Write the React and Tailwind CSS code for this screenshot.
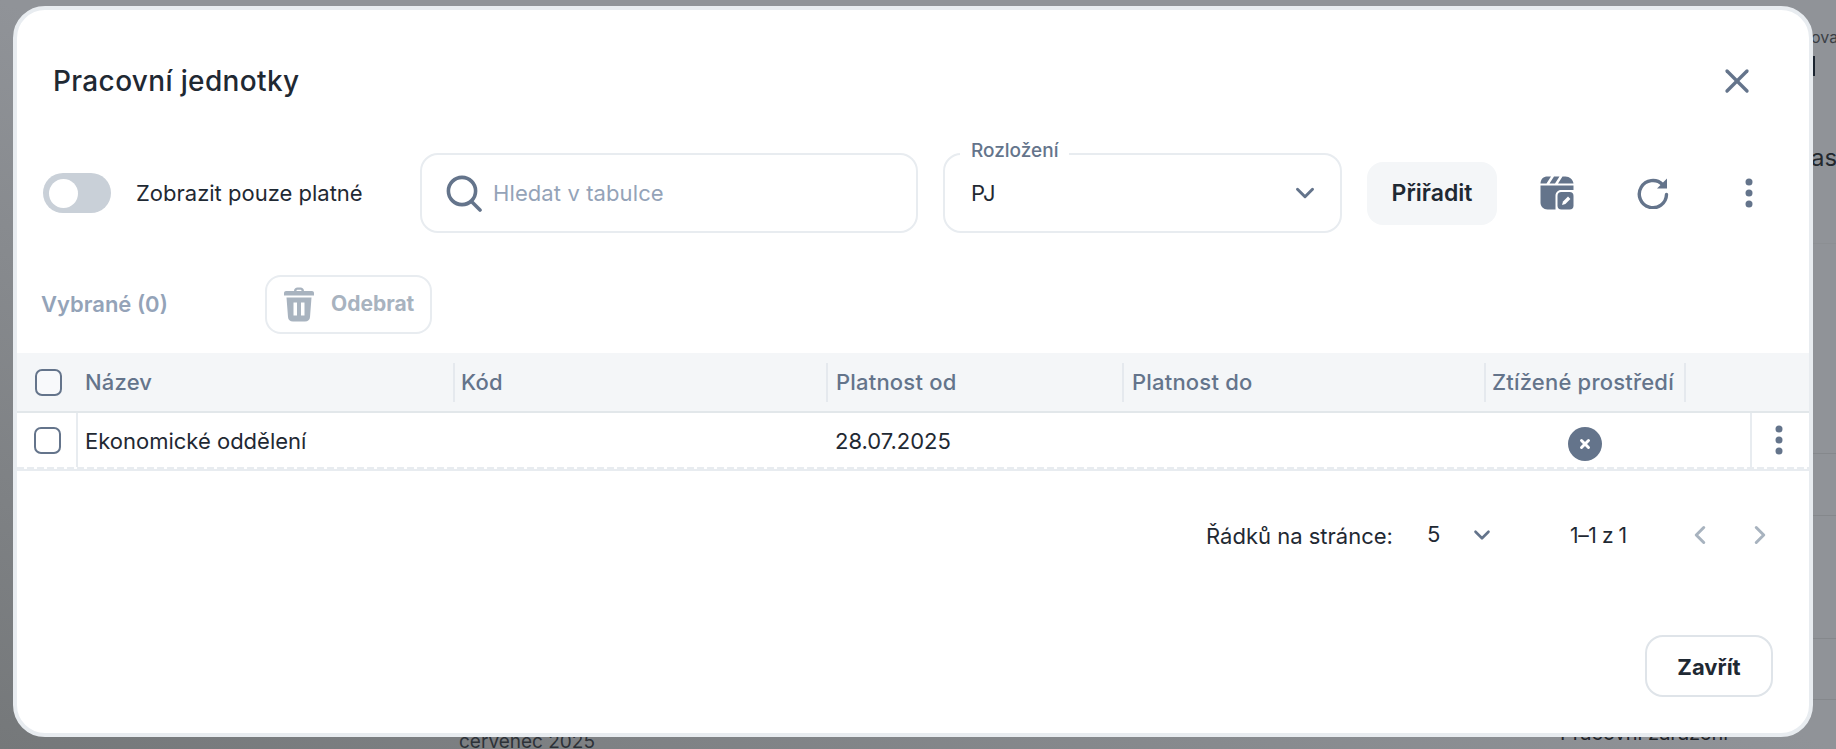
import React, { useState } from 'react';
import { ChevronDown, ChevronLeft, ChevronRight, X } from 'lucide-react';

const Dots = ({ className = '' }) => (
  <svg width="8" height="30" viewBox="0 0 8 30" className={className}>
    <circle cx="4" cy="4" r="3.5" fill="#64748b" />
    <circle cx="4" cy="15" r="3.5" fill="#64748b" />
    <circle cx="4" cy="26" r="3.5" fill="#64748b" />
  </svg>
);

const SearchIcon = () => (
  <svg width="36" height="37" viewBox="0 0 36 37" fill="none" stroke="#64748b" strokeWidth="3.6" strokeLinecap="round">
    <circle cx="16" cy="16" r="13.6" />
    <path d="M26 27l8 8" />
  </svg>
);

const ClapperIcon = () => (
  <svg width="34" height="34" viewBox="0 0 34 34">
    <path fill="#64748b" d="M6.5 0.5H11L6.5 7.5H0.5C0.8 3.5 3 0.8 6.5 0.5ZM14 0.5H19.5L15 7.5H9.5ZM22.5 0.5H25.5C29.5 0.5 33 3.5 33.5 7.5H18Z" />
    <path fill="#64748b" d="M0.5 9.5H33.5V14H21C18 14 15.5 16.5 15.5 19.5V33.5H7.5C3.5 33.5 0.5 30.5 0.5 26.5Z" />
    <rect x="17.5" y="16" width="16" height="17.5" rx="4" fill="#64748b" />
    <path d="M22 29l1-3.4 5-5 2.4 2.4-5 5z" fill="#fff" />
  </svg>
);

const RefreshIcon = () => (
  <svg width="32" height="32" viewBox="0 0 32 32" fill="none">
    <path d="M25.5 7.5A13.6 13.6 0 1 0 29.5 17.5" stroke="#64748b" strokeWidth="3.4" strokeLinecap="round" />
    <path d="M30 1.5V11.5H20Z" fill="#64748b" />
  </svg>
);

const TrashIcon = () => (
  <svg width="30" height="35" viewBox="0 0 30 35">
    <path fill="#a8b3bf" d="M10 4C10 1.8 11.6 0.5 13.5 0.5H16.5C18.4 0.5 20 1.8 20 4H28C29 4 30 4.8 30 6V8.5H0V6C0 4.8 1 4 2 4ZM12.5 4H17.5C17.5 3 17 2.8 16.2 2.8H13.8C13 2.8 12.5 3 12.5 4Z" />
    <path fill="#a8b3bf" fillRule="evenodd" d="M2.5 10.5H27.5L26 30C25.8 32.8 24 34.5 21 34.5H9C6 34.5 4.2 32.8 4 30ZM9.5 15.5V28.5H13V15.5ZM17 15.5V28.5H20.5V15.5Z" />
  </svg>
);

const Checkbox = () => (
  <span className="block w-[27px] h-[27px] rounded-[7px] border-2 border-[#64748b] bg-white/40" />
);

// hlavicka sloupce, sirka vcetne oddelovace vpravo
const HeaderCell = ({ children, width, pl = 'pl-2' }) => (
  <div className={`${width} ${pl} h-[39px] shrink-0 flex items-center border-r-2 border-[#e5e9ee] text-[#64748b] font-medium text-[22px] tracking-[0.2px] whitespace-nowrap`}>
    {children}
  </div>
);

export default function App() {
  const [onlyValid, setOnlyValid] = useState(false);

  return (
    <div className="relative w-[1836px] h-[749px] overflow-hidden bg-[linear-gradient(to_top_right,#75787a_0%,#909398_50%)] pl-[13px] pt-[6px] font-['Inter','Liberation_Sans',sans-serif]">
      {/* stranka pod dialogem */}
      <span className="absolute left-[1811px] top-[25px] text-[16px] text-[#3b4046] whitespace-nowrap">ova</span>
      <span className="absolute left-[1813px] top-[56px] w-[2px] h-[20px] bg-[#1b2430]" />
      <span className="absolute left-[1811px] top-[140px] text-[24px] text-[#23282e] whitespace-nowrap">ast</span>
      <span className="absolute left-[1813px] right-0 top-[243px] h-px bg-[#8c8f93]" />
      <span className="absolute left-[1813px] right-0 top-[453px] h-px bg-[#85888c]" />
      <span className="absolute left-[1813px] right-0 top-[515px] h-px bg-[#85888c]" />
      <span className="absolute left-[1813px] right-0 top-[638px] h-px bg-[#85888c]" />
      <span className="absolute left-[1813px] right-0 top-[699px] h-px bg-[#85888c]" />
      <span className="absolute left-[459px] top-[728px] text-[19px] text-[#2d3238] whitespace-nowrap">červenec 2025</span>
      <span className="absolute left-[1560px] top-[718px] text-[20px] text-[#1f2429] whitespace-nowrap">Pracovní zařazení</span>

      <div className="relative w-[1800px] h-[731px] bg-white border-4 border-[#e8ecf0] rounded-[32px] flex flex-col text-[#1f2933] overflow-hidden">
        {/* titulek */}
        <div className="flex items-center justify-between h-[110px] shrink-0 pl-[36px] pr-[52px] pt-[32px]">
          <h2 className="text-[28px] font-medium leading-none tracking-[0.35px] text-[#1f2933]">Pracovní jednotky</h2>
          <button className="text-[#64748b]">
            <X size={40} strokeWidth={2} />
          </button>
        </div>

        {/* filtry */}
        <div className="flex items-center h-[80px] shrink-0 mt-[33px]">
          <button
            onClick={() => setOnlyValid(!onlyValid)}
            className="ml-[26px] w-[68px] h-[40px] rounded-full bg-[#c9d0d8] flex items-center pl-[6px] shrink-0"
          >
            <span className="block w-[29px] h-[29px] rounded-full bg-white" />
          </button>
          <span className="ml-[25px] w-[284px] shrink-0 text-[22px] text-[#1f2933]">Zobrazit pouze platné</span>

          <div className="w-[498px] h-[80px] shrink-0 rounded-[18px] border-2 border-[#e8ecf0] flex items-center pl-[24px]">
            <SearchIcon />
            <input
              placeholder="Hledat v tabulce"
              className="ml-[11px] flex-1 min-w-0 outline-none text-[22px] tracking-[0.1px] placeholder:text-[#94a3b8]"
            />
          </div>

          <div className="relative ml-[25px] w-[399px] h-[80px] shrink-0 rounded-[18px] border-2 border-[#e8ecf0] flex items-center justify-between pl-[26px] pr-[20px]">
            <span className="absolute left-[15px] -top-[15px] px-[11px] bg-white text-[19px] leading-[22px] font-medium text-[#64748b]">Rozložení</span>
            <span className="text-[22px] text-[#1f2933]">PJ</span>
            <ChevronDown size={30} strokeWidth={2.4} className="text-[#64748b]" />
          </div>

          <button className="ml-[25px] w-[130px] h-[63px] shrink-0 rounded-[16px] bg-[#f4f6f8] text-[23px] font-semibold text-[#1f2933]">
            Přiřadit
          </button>

          <div className="ml-[43px] shrink-0 flex"><ClapperIcon /></div>
          <div className="ml-[63px] shrink-0 flex"><RefreshIcon /></div>
          <div className="ml-[76px] shrink-0 flex"><Dots /></div>
        </div>

        {/* vybrane */}
        <div className="flex items-center h-[59px] shrink-0 mt-[42px]">
          <span className="ml-[24px] w-[224px] shrink-0 text-[22px] font-semibold text-[#94a3b8]">Vybrané (0)</span>
          <button className="w-[167px] h-[59px] shrink-0 rounded-[16px] border-2 border-[#e8ecf0] flex items-center pl-[17px] gap-[17px] text-[21px] font-bold text-[#a8b3bf]">
            <TrashIcon />
            <span className="-mt-[2px]">Odebrat</span>
          </button>
        </div>

        {/* tabulka */}
        <div className="mt-[19px] shrink-0">
          <div className="h-[60px] bg-[#f4f6f8] border-b-2 border-[#e2e7ea] flex items-center">
            <div className="w-[61px] pl-[18px] shrink-0"><Checkbox /></div>
            <HeaderCell width="w-[377px]" pl="pl-[7px]">Název</HeaderCell>
            <HeaderCell width="w-[373px]" pl="pl-[6px]">Kód</HeaderCell>
            <HeaderCell width="w-[296px]">Platnost od</HeaderCell>
            <HeaderCell width="w-[362px]">Platnost do</HeaderCell>
            <HeaderCell width="w-[200px]" pl="pl-[6px]">Ztížené prostředí</HeaderCell>
          </div>
          <div className="h-[54px] flex text-[22px] text-[#1f2933]">
            <div className="w-[61px] shrink-0 border-r-2 border-[#e8ecf0] pl-[17px] flex items-center"><Checkbox /></div>
            <div className="w-[749px] shrink-0 pl-[7px] flex items-center"><span className="mt-[2px]">Ekonomické oddělení</span></div>
            <div className="w-[658px] shrink-0 pl-[8px] flex items-center"><span className="mt-[2px]">28.07.2025</span></div>
            <div className="w-[265px] shrink-0 flex items-center justify-end">
              <span className="mr-[148px] w-[34px] h-[34px] rounded-full bg-[#64748b] flex items-center justify-center mt-[7px]">
                <X size={14} strokeWidth={5} className="text-white" />
              </span>
            </div>
            <div className="flex-1 border-l-2 border-[#e8ecf0] flex items-center justify-center pr-[4px]">
              <Dots />
            </div>
          </div>
          {/* prerusovana linka nad plnou */}
          <div className="h-[2px] bg-[repeating-linear-gradient(to_right,#e8ecf0_0_7px,transparent_7px_10px)]" />
          <div className="h-[2px] bg-[#e8ecf0]" />
        </div>

        {/* strankovani */}
        <div className="flex items-center h-[40px] mt-[45px] shrink-0 text-[22px] text-[#1f2933]">
          <span className="ml-[1189px] w-[221px] shrink-0 whitespace-nowrap">Řádků na stránce:</span>
          <span className="w-[42px] shrink-0 -mt-[4px]">5</span>
          <ChevronDown size={26} strokeWidth={2.4} className="text-[#64748b] shrink-0 -mt-[2px]" />
          <span className="ml-[75px] w-[115px] shrink-0 text-[21px] tracking-[-0.4px] whitespace-nowrap">1–1 z 1</span>
          <ChevronLeft size={30} strokeWidth={2.4} className="text-[#a8b3bf] shrink-0 -mt-[3px]" />
          <ChevronRight size={30} strokeWidth={2.4} className="ml-[30px] text-[#a8b3bf] shrink-0 -mt-[3px]" />
        </div>

        {/* paticka */}
        <div className="mt-auto mb-[36px] flex justify-end pr-[36px]">
          <button className="w-[128px] h-[62px] rounded-[18px] border-2 border-[#dfe4e9] text-[22px] font-bold text-[#1f2933]">
            <span className="block mt-[2px]">Zavřít</span>
          </button>
        </div>
      </div>
    </div>
  );
}
